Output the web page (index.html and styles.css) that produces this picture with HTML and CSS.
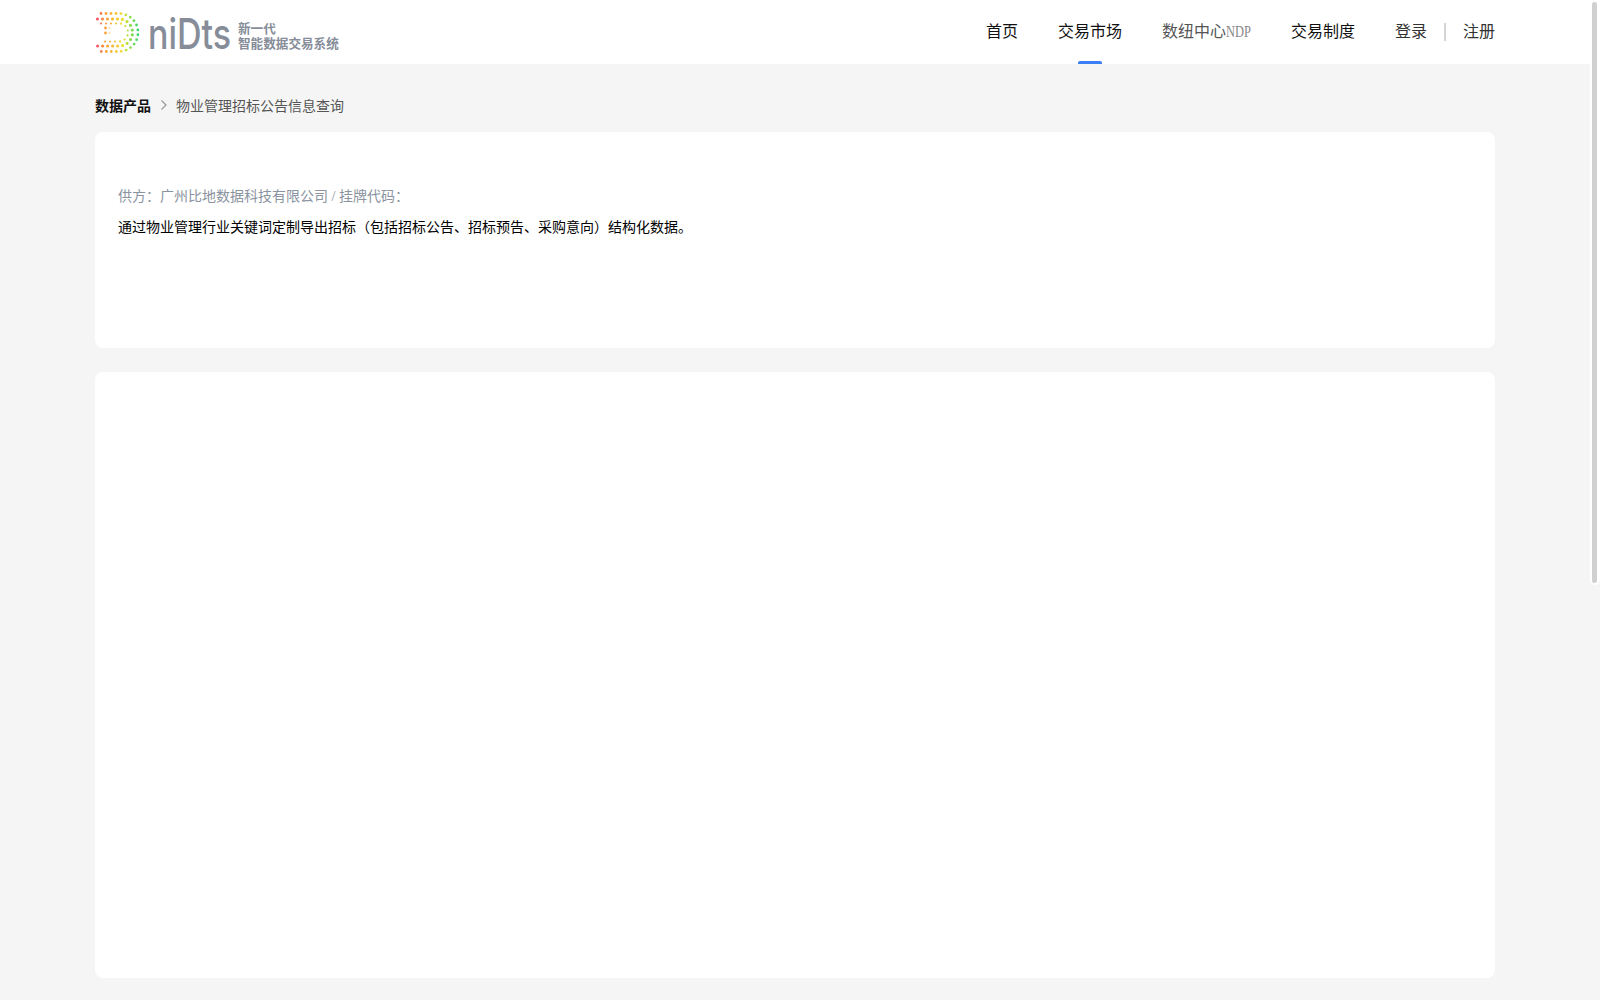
FILE: index.html
```html
<!DOCTYPE html>
<html lang="zh-CN">
<head>
    <meta charset="UTF-8">
    <meta name="viewport" content="width=device-width, initial-scale=1.0">
    <title>物业管理招标公告信息查询</title>
    <link rel="stylesheet" href="styles.css">
</head>
<body>
    <header class="header">
        <div class="container header-inner">
            <a class="logo" href="#">
                <svg class="logo-mark" width="48" height="44" viewBox="0 0 48 44">
                    <defs>
                        <linearGradient id="dots" gradientUnits="userSpaceOnUse" x1="0" y1="0" x2="46" y2="0">
                            <stop offset="0" stop-color="#f4437c"/>
                            <stop offset="0.2" stop-color="#fb9a3c"/>
                            <stop offset="0.6" stop-color="#efe02c"/>
                            <stop offset="0.95" stop-color="#2fd86a"/>
                        </linearGradient>
                    </defs>
                    <!-- dots of the D, outer ring to inner ring -->
                    <path class="dot-ring" stroke-width="2.8" d="M6 2.5H24A19 19 0 0 1 24 40.5H6"/>
                    <path class="dot-ring" stroke-width="3.2" d="M2.5 8H24A13.5 13.5 0 0 1 24 35H2.5"/>
                    <path class="dot-ring" stroke-width="2.2" d="M6 12.5H24A9 9 0 0 1 24 30.5H6"/>
                    <path class="dot-ring" stroke-width="2.8" d="M10.5 17V27"/>
                    <path class="dot-ring dot-ring-faint" stroke-width="2" d="M14.5 17V27"/>
                </svg>
                <span class="logo-word">niDts</span>
                <span class="logo-text">
                    <span>新一代</span>
                    <span>智能数据交易系统</span>
                </span>
            </a>
            <nav class="nav">
                <a class="nav-item" href="#">首页</a>
                <a class="nav-item active" href="#">交易市场</a>
                <a class="nav-item muted" href="#">数纽中心<span class="ndp">NDP</span></a>
                <a class="nav-item" href="#">交易制度</a>
            </nav>
            <div class="account">
                <a href="#">登录</a>
                <span class="account-line"></span>
                <a href="#">注册</a>
            </div>
        </div>
    </header>

    <main class="container">
        <div class="breadcrumb">
            <a class="crumb-root" href="#">数据产品</a>
            <svg class="crumb-arrow" width="8" height="12" viewBox="0 0 8 12">
                <path d="M1.5 1.5L6 6L1.5 10.5" fill="none" stroke="#999" stroke-width="1.2"/>
            </svg>
            <span class="crumb-current">物业管理招标公告信息查询</span>
        </div>

        <section class="card summary">
            <p class="supplier">供方：广州比地数据科技有限公司 / 挂牌代码：</p>
            <p class="desc">通过物业管理行业关键词定制导出招标（包括招标公告、招标预告、采购意向）结构化数据。</p>
        </section>

        <section class="card detail"></section>
    </main>

    <div class="scroll-track"><div class="scroll-thumb"></div></div>
</body>
</html>
```

FILE: styles.css
```css
* {
    box-sizing: border-box;
}

html, body {
    height: 100%;
}

body {
    margin: 0;
    padding-right: 10px; /* room for the scrollbar */
    background-color: #f5f5f5;
    font-family: "Liberation Serif", "Noto Sans CJK SC", serif;
    font-size: 14px;
    color: #000;
    overflow: hidden;
}

a {
    color: inherit;
    text-decoration: none;
}

.container {
    width: 1400px;
    margin: 0 auto;
}

/* Header */
.header {
    height: 64px;
    background-color: #fff;
}

.header-inner {
    display: flex;
    align-items: center;
    height: 100%;
}

.logo {
    display: flex;
    align-items: center;
    margin-right: auto;
}

.logo-mark {
    margin-top: 1px;
}

.dot-ring {
    fill: none;
    stroke: url(#dots);
    stroke-linecap: round;
    stroke-dasharray: 0 5;
}

.dot-ring-faint {
    opacity: 0.45;
}

/* tall wordmark: set small and stretched up so it keeps its width */
.logo-word {
    width: 85px;
    margin-left: 5px;
    padding-top: 3px;
    font-family: "Inter", sans-serif;
    font-size: 34px;
    font-weight: 500;
    line-height: 44px;
    white-space: nowrap;
    color: #868d99;
    transform: scaleY(1.25);
}

.logo-text {
    display: flex;
    flex-direction: column;
    margin-left: 5px;
    padding-top: 6px;
    font-family: "Noto Sans CJK SC", sans-serif;
    font-size: 12.6px;
    font-weight: 700;
    line-height: 15px;
    color: #868d99;
}

.nav {
    display: flex;
    gap: 40px;
    height: 100%;
}

.nav-item {
    position: relative;
    font-size: 16px;
    line-height: 64px;
    color: #111;
}

.nav-item.muted {
    color: #555;
}

/* NDP is a tall, narrow serif in the original */
.ndp {
    display: inline-block;
    width: 25px;
    color: #888;
    white-space: nowrap;
    transform: scaleX(0.78);
    transform-origin: left center;
}

.nav-item.active::after {
    content: "";
    position: absolute;
    left: 50%;
    bottom: 0;
    width: 24px;
    height: 3px;
    margin-left: -12px;
    border-radius: 2px 2px 0 0;
    background-color: #3a7ff6;
}

.account {
    display: flex;
    align-items: center;
    height: 100%;
    margin-left: 40px;
    font-size: 16px;
    line-height: 64px;
    color: #333;
}

.account-line {
    width: 2px;
    height: 18px;
    margin: 0 17px;
    background-color: #d4d4d4;
}

/* Breadcrumb */
.breadcrumb {
    display: flex;
    align-items: center;
    height: 68px;
    padding-top: 14px;
}

.crumb-root {
    font-weight: 700;
    color: #111;
}

.crumb-arrow {
    margin: 0 8px 0 9px;
}

.crumb-current {
    color: #555;
}

/* Cards */
.card {
    background-color: #fff;
    border-radius: 8px;
}

.summary {
    height: 216px;
    padding: 55px 23px 0;
}

.supplier {
    margin: 0;
    line-height: 20px;
    color: #8a93a0;
}

.desc {
    margin: 11px 0 0;
    line-height: 20px;
    color: #000;
}

.detail {
    height: 606px;
    margin-top: 24px;
}

/* Scrollbar drawn by the page */
.scroll-track {
    position: absolute;
    top: 0;
    right: 0;
    width: 10px;
    height: 585px;
    padding: 2px 3px 2px 2px;
    border-radius: 0 0 5px 5px;
    background-color: #fff;
}

.scroll-thumb {
    height: 100%;
    border-radius: 3px;
    background-color: #d0d0d0;
}
```
